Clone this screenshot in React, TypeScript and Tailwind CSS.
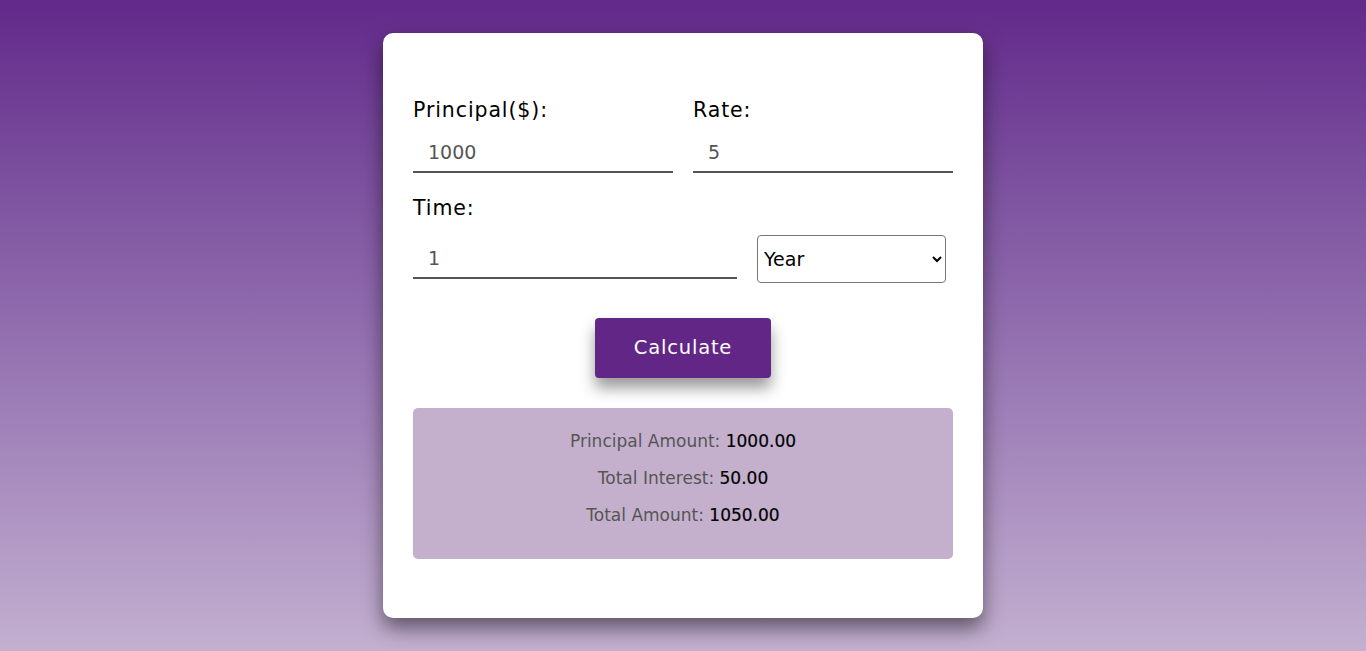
export default function App() {
  return (
    <div className="min-h-[651px] w-full bg-linear-to-b from-[#62288a] to-[#c3b0d0] pt-[33px] pb-[33px] font-['DejaVu_Sans',sans-serif]">
      <div className="mx-auto w-[600px] rounded-[10px] bg-white px-[30px] pt-[62px] pb-[59px] shadow-[0_10px_20px_rgba(0,0,0,0.5)]">
        {/* Principal + rate */}
        <div className="grid grid-cols-2 gap-[20px]">
          <div>
            <label className="block text-[20.5px] leading-[31px] tracking-[0.9px] text-black">Principal($):</label>
            <input
              type="number"
              defaultValue="1000"
              className="mt-[7px] h-[40px] w-full border-b-2 border-[#555] px-[15px] text-[19px] text-[#555] outline-none"
            />
          </div>
          <div>
            <label className="block text-[20.5px] leading-[31px] tracking-[0.9px] text-black">Rate:</label>
            <input
              type="number"
              defaultValue="5"
              className="mt-[7px] h-[40px] w-full border-b-2 border-[#555] px-[15px] text-[19px] text-[#555] outline-none"
            />
          </div>
        </div>

        {/* Time */}
        <label className="mt-[20px] block text-[20.5px] leading-[31px] tracking-[0.9px] text-black">Time:</label>
        <div className="mt-[11px] flex items-center gap-[20px]">
          <input
            type="number"
            defaultValue="1"
            className="h-[40px] w-[324px] border-b-2 border-[#555] px-[15px] text-[19px] text-[#555] outline-none"
          />
          <select className="h-[48px] w-[189px] rounded-[4px] border border-[#767676] bg-white px-[2px] text-[19px] text-black">
            <option>Year</option>
            <option>Month</option>
            <option>Day</option>
          </select>
        </div>

        {/* Button */}
        <div className="mt-[35px] flex justify-center">
          <button className="h-[60px] w-[176px] rounded-[4px] bg-[#622686] text-[19.5px] tracking-[0.8px] text-white shadow-[0_10px_15px_rgba(0,0,0,0.4)]">
            Calculate
          </button>
        </div>

        {/* Result */}
        <div className="mt-[30px] flex flex-col items-center gap-[10px] rounded-[5px] bg-[#c4b0cd] pt-[20px] pb-[30px] text-[17px] leading-[27px]">
          <p className="text-[#555]">
            Principal Amount: <span className="text-black [-webkit-text-stroke:0.2px_black]">1000.00</span>
          </p>
          <p className="text-[#555]">
            Total Interest: <span className="text-black [-webkit-text-stroke:0.2px_black]">50.00</span>
          </p>
          <p className="text-[#555]">
            Total Amount: <span className="text-black [-webkit-text-stroke:0.2px_black]">1050.00</span>
          </p>
        </div>
      </div>
    </div>
  );
}
